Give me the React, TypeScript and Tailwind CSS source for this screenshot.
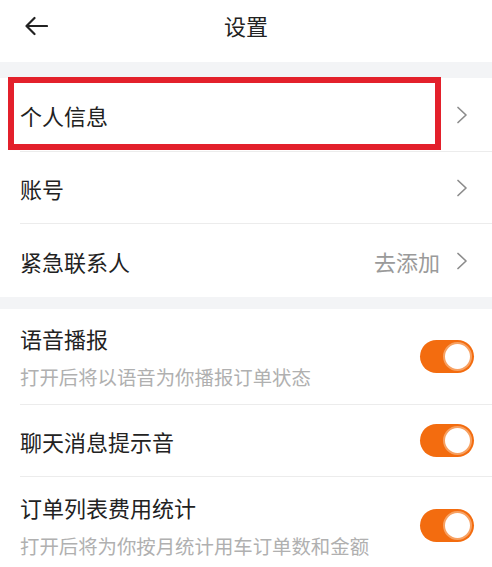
import React from "react";

const FONT = { fontFamily: '"Noto Sans CJK SC", "Noto Sans", sans-serif' };

function Chevron() {
  return (
    <svg width="12" height="18" viewBox="0 0 12 18" fill="none" className="shrink-0">
      <path d="M2 1.5 L10 9 L2 16.5" stroke="#8c8c8c" strokeWidth="1.7" strokeLinecap="round" strokeLinejoin="round" />
    </svg>
  );
}

function Toggle() {
  return (
    <div className="w-[54px] h-[33px] rounded-full bg-[#f36c0f] flex items-center justify-end pr-[2px] shrink-0">
      <div className="w-[29px] h-[29px] rounded-full bg-white border-2 border-[#f7a162]" />
    </div>
  );
}

function LinkRow({ label, value, last, h }: { label: string; value?: string; last?: boolean; h: string }) {
  return (
    <div className={`relative flex items-center pl-5 ${h}`}>
      <div className={`flex-1 flex items-center h-full pr-6 ${last ? "" : "border-b border-[#ececec]"}`}>
        <span className="flex-1 text-[22px] leading-[30px] text-[#222]">{label}</span>
        {value && <span className="text-[22px] leading-[30px] text-[#9a9a9a] mr-[16px]">{value}</span>}
        <Chevron />
      </div>
    </div>
  );
}

function SwitchRow({ title, sub, last, h }: { title: string; sub?: string; last?: boolean; h: string }) {
  return (
    <div className={`flex pl-5 ${h}`}>
      <div className={`flex-1 flex items-center pr-[18px] ${last ? "" : "border-b border-[#ececec]"}`}>
        <div className="flex-1 flex flex-col">
          <span className="text-[22px] leading-[30px] text-[#222]">{title}</span>
          {sub && <span className="text-[19.4px] leading-[26px] text-[#b0b0b0] mt-[11px]">{sub}</span>}
        </div>
        <Toggle />
      </div>
    </div>
  );
}

export default function App() {
  return (
    <div className="w-[492px] h-[567px] bg-white overflow-hidden" style={FONT}>
      {/* header */}
      <div className="relative h-[62px] flex items-center justify-center">
        <svg width="24" height="20" viewBox="0 0 24 20" fill="none" className="absolute left-[24px] top-[16px]">
          <path d="M23 10 H2.5 M10.5 2 L2.5 10 L10.5 18" stroke="#222" strokeWidth="2.2" strokeLinecap="round" strokeLinejoin="round" />
        </svg>
        <span className="text-[22px] leading-[30px] text-[#222] -mt-[12px]">设置</span>
      </div>

      <div className="h-[16px] bg-[#f3f4f6]" />

      <div className="relative">
        <LinkRow label="个人信息" h="h-[74px]" />
        <div className="absolute left-[8px] top-[-1px] w-[433px] h-[73px] border-[6px] border-[#e3202b]" />
      </div>
      <LinkRow label="账号" h="h-[72px]" />
      <LinkRow label="紧急联系人" value="去添加" last h="h-[73px]" />

      <div className="h-[12px] bg-[#f3f4f6]" />

      <SwitchRow title="语音播报" sub="打开后将以语音为你播报订单状态" h="h-[96px]" />
      <SwitchRow title="聊天消息提示音" h="h-[72px]" />
      <SwitchRow title="订单列表费用统计" sub="打开后将为你按月统计用车订单数和金额" last h="h-[96px]" />
    </div>
  );
}
